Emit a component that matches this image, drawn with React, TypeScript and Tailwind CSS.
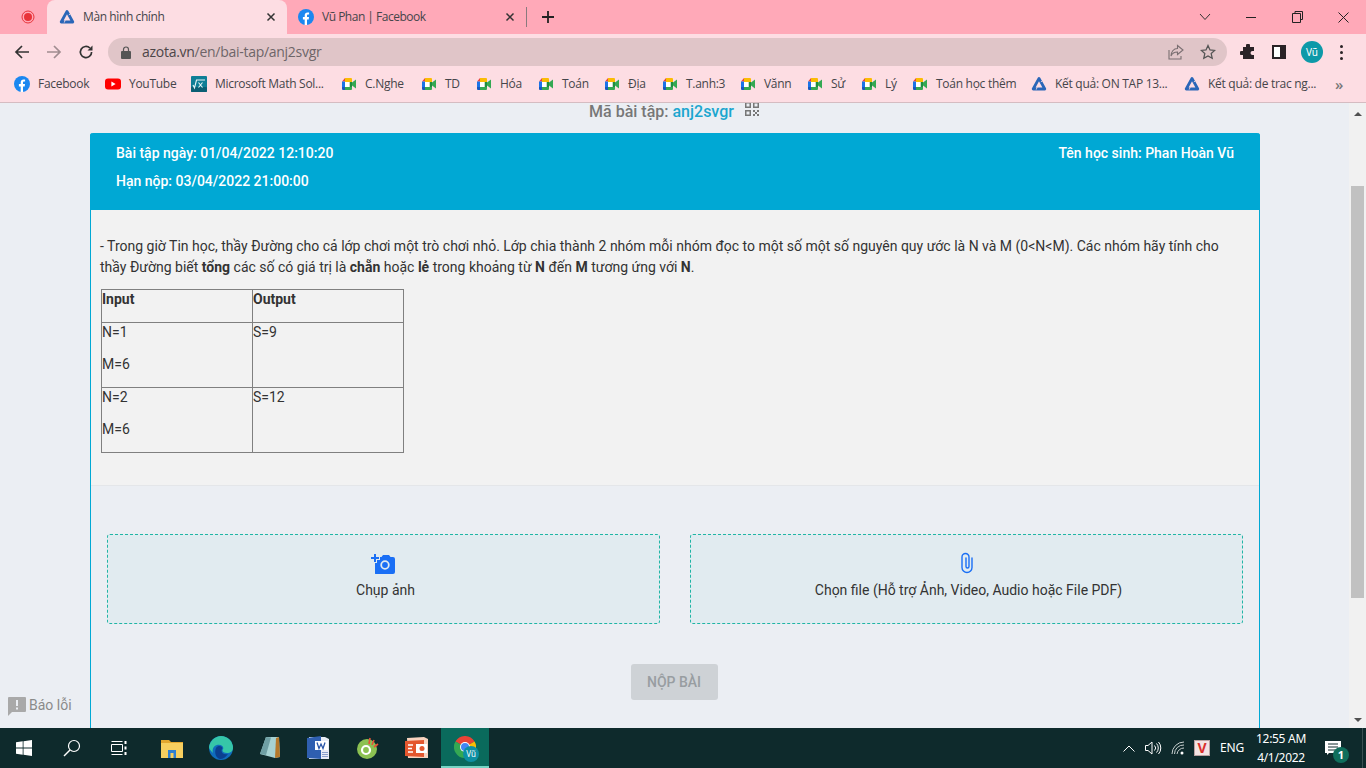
import React from "react";

const Fb = ({ s = 16 }: { s?: number }) => (
  <svg width={s} height={s} viewBox="0 0 16 16" className="shrink-0">
    <circle cx="8" cy="8" r="8" fill="#1b87f0" />
    <path d="M6.7 16V10.4H4.9V8h1.8V6.4c0-1.9 1.1-2.9 2.8-2.9.8 0 1.6.1 1.6.1v1.9h-.9c-.9 0-1.2.6-1.2 1.1V8h2l-.3 2.4H9V16z" fill="#fff" />
  </svg>
);
const Azota = ({ s = 16 }: { s?: number }) => (
  <svg width={s} height={s} viewBox="0 0 16 16" className="shrink-0">
    <path d="M8 2.400 L13.800 13 H2.200 Z" fill="none" stroke="#2a66b8" strokeWidth="2.800" strokeLinejoin="round" />
    <path d="M5.200 13.600 L6.400 10.600" stroke="#fddde3" strokeWidth="0.800" />
    <path d="M9.800 6 L11.200 5" stroke="#fddde3" strokeWidth="0.800" />
  </svg>
);
const Meet = () => (
  <svg width="16" height="16" viewBox="0 0 16 16" className="shrink-0">
    <path d="M4 2H10a1 1 0 0 1 1 1V6H4z" fill="#fbbc04" />
    <path d="M4 2 1 5.500H4z" fill="#e8453c" />
    <path d="M1 5.500h3V11H1z" fill="#1a73e8" />
    <path d="M1 11h3v3H2a1 1 0 0 1-1-1z" fill="#1558c0" />
    <path d="M4 11H11V13a1 1 0 0 1-1 1H4z" fill="#34a853" />
    <path d="M8.500 6H11V11H8.500z" fill="#1e8e3e" />
    <path d="M4 6h4.500v5H4z" fill="#fff" />
    <path d="M11 6.500 15 3.500V12.500L11 9.500z" fill="#34a853" />
  </svg>
);
const Yt = () => (
  <svg width="16" height="16" viewBox="0 0 16 16" className="shrink-0">
    <rect y="2.500" width="16" height="11" rx="3" fill="#f00" />
    <path d="M6.400 5.600 10.600 8l-4.200 2.400z" fill="#fff" />
  </svg>
);
const MathI = () => (
  <svg width="16" height="16" viewBox="0 0 16 16" className="shrink-0">
    <rect width="16" height="16" rx="1" fill="#0e7e96" />
    <rect y="11" width="16" height="5" rx="1" fill="#0a5f74" />
    <path d="M2 9l1.500 3L5.500 4H14" fill="none" stroke="#e8f6f8" strokeWidth="1.100" />
    <path d="M7.500 6.500l4 5M11.500 6.500l-4 5" stroke="#e8f6f8" strokeWidth="1.100" />
  </svg>
);

type Bm = { icon: React.ReactNode; label: string; w: string };
const bookmarks: Bm[] = [
  { icon: <Fb />, label: "Facebook", w: "w-[51px]" },
  { icon: <Yt />, label: "YouTube", w: "w-[46px]" },
  { icon: <MathI />, label: "Microsoft Math Sol...", w: "w-[110px]" },
  { icon: <Meet />, label: "C.Nghe", w: "w-[40px]" },
  { icon: <Meet />, label: "TD", w: "w-[15px]" },
  { icon: <Meet />, label: "Hóa", w: "w-[22px]" },
  { icon: <Meet />, label: "Toán", w: "w-[26px]" },
  { icon: <Meet />, label: "Địa", w: "w-[18px]" },
  { icon: <Meet />, label: "T.anh:3", w: "w-[38px]" },
  { icon: <Meet />, label: "Vănn", w: "w-[27px]" },
  { icon: <Meet />, label: "Sử", w: "w-[14px]" },
  { icon: <Meet />, label: "Lý", w: "w-[11px]" },
  { icon: <Meet />, label: "Toán học thêm", w: "w-[79px]" },
  { icon: <Azota />, label: "Kết quả: ON TAP 13...", w: "w-[113px]" },
  { icon: <Azota />, label: "Kết quả: de trac ng...", w: "w-[109px]" },
];

const X = ({ c = "#333" }: { c?: string }) => (
  <svg width="10" height="10" viewBox="0 0 10 10"><path d="M1.500 1.500l7 7M8.500 1.500l-7 7" stroke={c} strokeWidth="1.500" /></svg>
);

function TabStrip() {
  return (
    <div className="h-[34px] bg-[#ffa9b8] flex items-stretch shrink-0 text-[#45454a]">
      <div className="w-[47px] flex items-center justify-center pl-[8px]">
        <svg width="14" height="14" viewBox="0 0 14 14"><circle cx="7" cy="7" r="6" fill="none" stroke="#e8343a" strokeWidth="1" /><circle cx="7" cy="7" r="4" fill="#e8343a" /></svg>
      </div>
      <div className="w-[240px] bg-[#fddde3] rounded-t-[8px] flex items-center pl-[12px] pr-[11px]">
        <Azota />
        <span className="ml-[8px] flex-1 text-[12px] tracking-[-0.4px]">Màn hình chính</span>
        <X />
      </div>
      <div className="w-[239px] flex items-center pl-[11px] pr-[11px] relative">
        <Fb />
        <span className="ml-[8px] flex-1 text-[12px] tracking-[-0.5px]">Vũ Phan | Facebook</span>
        <X />
      </div>
      <div className="w-px h-[20px] bg-[#8a7a7e] self-center" />
      <div className="w-[42px] flex items-center justify-center">
        <svg width="14" height="14" viewBox="0 0 14 14"><path d="M7 1v12M1 7h12" stroke="#222" strokeWidth="1.800" /></svg>
      </div>
      <div className="flex-1 flex items-center justify-end">
        <div className="w-[46px] flex justify-center">
          <svg width="12" height="8" viewBox="0 0 12 8"><path d="M1 1l5 5.500L11 1" fill="none" stroke="#333" strokeWidth="1" /></svg>
        </div>
        <div className="w-[46px] flex justify-center">
          <div className="w-[10px] h-px bg-[#222]" />
        </div>
        <div className="w-[46px] flex justify-center">
          <svg width="11" height="12" viewBox="0 0 11 12"><path d="M3 2.500V.5h7.500v8H8.500M.5 2.500h8v9h-8z" fill="none" stroke="#222" strokeWidth="1" /></svg>
        </div>
        <div className="w-[46px] flex justify-center">
          <svg width="11" height="11" viewBox="0 0 11 11"><path d="M.5.5l10 10M10.500.5l-10 10" stroke="#222" strokeWidth="1" /></svg>
        </div>
      </div>
    </div>
  );
}

function Toolbar() {
  return (
    <div className="h-[34px] bg-[#fddde3] flex items-center shrink-0 pt-[2px]">
      <div className="w-[108px] flex items-center pl-[14px] gap-[16px]">
        <svg width="16" height="16" viewBox="0 0 16 16"><path d="M15 8H2M8 2 2 8l6 6" fill="none" stroke="#333" strokeWidth="1.700" /></svg>
        <svg width="16" height="16" viewBox="0 0 16 16"><path d="M1 8h13M8 2l6 6-6 6" fill="none" stroke="#a08c90" strokeWidth="1.700" /></svg>
        <svg width="16" height="16" viewBox="0 0 16 16"><path d="M13.600 8a5.600 5.600 0 1 1-1.700-4" fill="none" stroke="#333" strokeWidth="1.700" /><path d="M14.500 1.500v5h-5z" fill="#333" /></svg>
      </div>
      <div className="w-[1119px] h-[28px] rounded-full bg-[#e0c5c8] flex items-center pl-[13px] pr-[11px]">
        <svg width="10" height="13" viewBox="0 0 10 13"><path d="M2.500 5V3.500a2.500 2.500 0 0 1 5 0V5" fill="none" stroke="#555" strokeWidth="1.200" /><rect y="5" width="10" height="8" rx="1" fill="#555" /></svg>
        <span className="ml-[11px] text-[14px] tracking-[-0.28px] text-[#4d4648] flex-1 leading-none">azota.vn<span className="text-[#6e6568]">/en/bai-tap/anj2svgr</span></span>
        <svg width="18" height="18" viewBox="0 0 18 18"><path d="M10.500 2.500 16 7l-5.500 4.500V9C7 9 5 10.500 4 13c0-4 2.500-7.500 6.500-7.500z M2 7v9h12v-3" fill="none" stroke="#7a6f72" strokeWidth="1.100" /></svg>
        <svg width="16" height="16" viewBox="0 0 16 16" className="ml-[15px]"><path d="M8 1.500l2 4.400 4.700.5-3.500 3.200 1 4.700L8 11.900l-4.200 2.400 1-4.700L1.300 6.400 6 5.900z" fill="none" stroke="#555" strokeWidth="1.300" /></svg>
      </div>
      <div className="flex-1 flex items-center pl-[13px]">
        <svg width="16" height="16" viewBox="0 0 16 16"><path d="M6 1.500a2 2 0 0 1 4 0V3h4v4h-1.500a2 2 0 0 0 0 4H14v4H3v-4H1.500a2 2 0 0 1 0-4H3V3h3z" fill="#2a2226" /></svg>
        <div className="ml-[16px] w-[14px] h-[14px] border-2 border-[#2a2226] border-r-[6px] bg-white" />
        <div className="ml-[15px] w-[22px] h-[22px] rounded-full bg-[#0d99a8] flex items-center justify-center text-white text-[10px]" style={{ fontFamily: "'Noto Sans'" }}>Vũ</div>
        <div className="ml-[17px] flex flex-col gap-[3px]">
          <div className="w-[3px] h-[3px] rounded-full bg-[#2a2226]" />
          <div className="w-[3px] h-[3px] rounded-full bg-[#2a2226]" />
          <div className="w-[3px] h-[3px] rounded-full bg-[#2a2226]" />
        </div>
      </div>
    </div>
  );
}

function Bookmarks() {
  return (
    <div className="h-[35px] bg-[#fddde3] border-b border-[#d5bcc1] flex items-center pl-[14px] pb-[2px] shrink-0 text-[12px] tracking-[-0.28px] text-[#45454a]">
      <div className="flex items-center gap-[16px]">
        {bookmarks.map((b) => (
          <div key={b.label} className="flex items-center gap-[8px]">
            {b.icon}
            <span className={`${b.w} whitespace-nowrap`}>{b.label}</span>
          </div>
        ))}
      </div>
      <span className="ml-[18px] text-[15px] font-semibold text-[#777]">»</span>
    </div>
  );
}

function Scrollbar() {
  return (
    <div className="w-[17px] bg-[#f1f1f1] flex flex-col items-center shrink-0">
      <div className="h-[17px] mt-[1px] flex items-center justify-center">
        <div className="w-0 h-0 border-l-[4px] border-r-[4px] border-b-[4px] border-l-transparent border-r-transparent border-b-[#505050] mt-[3px]" />
      </div>
      <div className="mt-[65px] w-[13px] h-[412px] bg-[#c1c1c1]" />
      <div className="flex-1" />
      <div className="h-[17px] flex items-center justify-center">
        <div className="w-0 h-0 border-l-[4px] border-r-[4px] border-t-[4px] border-l-transparent border-r-transparent border-t-[#505050]" />
      </div>
    </div>
  );
}

const cellP = "h-[32px] leading-[18px]";

function Sheet() {
  return (
    <table className="border-collapse w-[303px] table-fixed text-[14px] text-[#333]">
      <tbody>
        <tr className="h-[33px]">
          <td className="border border-[#808080] align-top p-0 font-bold"><p className={cellP}>Input</p></td>
          <td className="border border-[#808080] align-top p-0 font-bold"><p className={cellP}>Output</p></td>
        </tr>
        <tr>
          <td className="border border-[#808080] align-top p-0"><p className={cellP}>N=1</p><p className={cellP}>M=6</p></td>
          <td className="border border-[#808080] align-top p-0"><p className={cellP}>S=9</p></td>
        </tr>
        <tr>
          <td className="border border-[#808080] align-top p-0"><p className={cellP}>N=2</p><p className={cellP}>M=6</p></td>
          <td className="border border-[#808080] align-top p-0"><p className={cellP}>S=12</p></td>
        </tr>
      </tbody>
    </table>
  );
}

function Page() {
  return (
    <div className="flex-1 min-h-0 flex bg-[#ebeef3]" style={{ fontFamily: "Roboto, sans-serif" }}>
      <div className="flex-1 relative overflow-hidden">
        <div className="h-[30px] flex items-start justify-center text-[16px] font-medium text-[#777] leading-[18px]">
          <span>Mã bài tập: <span className="text-[#1ba6cf]">anj2svgr</span></span>
          <svg width="16" height="16" viewBox="0 0 16 16" className="ml-[10px] -mt-[2px]" fill="#777">
            <path d="M1 1h6v6H1zM2.500 2.500v3h3v-3zM9 1h6v6H9zM10.500 2.500v3h3v-3zM1 9h6v6H1zM2.500 10.500v3h3v-3z" fillRule="evenodd" />
            <path d="M9 9h2v2H9zM13 9h2v2h-2zM11 11h2v2h-2zM9 13h2v2H9zM13 13h2v2h-2z" />
          </svg>
        </div>
        <div className="ml-[90px] w-[1170px] border-x border-[#00a8d4] rounded-t-[3px]">
          <div className="h-[77px] -mx-px bg-[#00a8d4] rounded-t-[3px] px-[26px] pt-[10px] text-white text-[14px] font-medium leading-[20px]">
            <div className="flex justify-between"><span>Bài tập ngày: 01/04/2022 12:10:20</span><span>Tên học sinh: Phan Hoàn Vũ</span></div>
            <div className="mt-[8px]">Hạn nộp: 03/04/2022 21:00:00</div>
          </div>
          <div className="bg-[#f2f2f2] h-[276px] border-b border-[#e4e6e9] pl-[9px] pr-[25px] pt-[26px] text-[14px] text-[#333] leading-[21px]">
            <p>- Trong giờ Tin học, thầy Đường cho cả lớp chơi một trò chơi nhỏ. Lớp chia thành 2 nhóm mỗi nhóm đọc to một số một số nguyên quy ước là N và M (0&lt;N&lt;M). Các nhóm hãy tính cho thầy Đường biết <b>tổng</b> các số có giá trị là <b>chẵn</b> hoặc <b>lẻ</b> trong khoảng từ <b>N</b> đến <b>M</b> tương ứng với <b>N</b>.</p>
            <div className="mt-[11px] ml-px"><Sheet /></div>
          </div>
          <div className="pt-[48px] px-[16px] flex gap-[30px]">
            <div className="flex-1 h-[90px] bg-[#e1ebf0] border border-dashed border-[#20b5a5] rounded-[3px] flex flex-col items-center pt-[17px]">
              <svg width="24" height="22" viewBox="0 0 24 22" className="-ml-[2px]">
                <path d="M3 2h2v3h3v2H5v3H3V7H0V5h3z" fill="#1a6ff5" />
                <path d="M6 8h3V5h1.500l1.500-2h6l1.500 2H22a2 2 0 0 1 2 2v13a2 2 0 0 1-2 2H5a2 2 0 0 1-1-.3V11h2z" fill="#1a6ff5" />
                <circle cx="14" cy="13" r="3.800" fill="none" stroke="#e1ebf0" strokeWidth="1.800" />
              </svg>
              <span className="mt-[6px] ml-[4px] text-[14px] text-[#333] leading-[20px]">Chụp ảnh</span>
            </div>
            <div className="flex-1 h-[90px] bg-[#e1ebf0] border border-dashed border-[#20b5a5] rounded-[3px] flex flex-col items-center pt-[17px]">
              <svg width="14" height="22" viewBox="0 0 14 22">
                <path d="M12 6V15.500a5 5 0 0 1-10 0V5a3.500 3.500 0 0 1 7 0V14.500a1.500 1.500 0 0 1-3 0V6" fill="none" stroke="#1a6ff5" strokeWidth="1.400" strokeLinecap="round" />
              </svg>
              <span className="mt-[6px] ml-[4px] text-[14px] text-[#333] leading-[20px]">Chọn file (Hỗ trợ Ảnh, Video, Audio hoặc File PDF)</span>
            </div>
          </div>
          <div className="flex justify-center pt-[40px] pb-[28px]">
            <div className="w-[87px] h-[36px] -ml-[2px] rounded-[3px] bg-[#ced2d6] text-[#989da1] text-[14px] font-medium flex items-center justify-center">NỘP BÀI</div>
          </div>
        </div>
        <div className="absolute left-[7px] bottom-[12px] flex items-center text-[14px] text-[#8a8a8a]">
          <svg width="20" height="20" viewBox="0 0 20 20"><path d="M2 1h16a1 1 0 0 1 1 1v13a1 1 0 0 1-1 1H5l-4 4V2a1 1 0 0 1 1-1z" fill="#a9a9a9" /><path d="M9 4h2v6H9zM9 11.500h2v2H9z" fill="#ebeef3" /></svg>
          <span className="ml-[2px]">Báo lỗi</span>
        </div>
      </div>
      <Scrollbar />
    </div>
  );
}

function Taskbar() {
  const cell = "w-[48px] h-full flex items-center justify-center relative shrink-0";
  const app = "w-[49px] h-full flex items-center justify-center relative shrink-0";
  return (
    <div className="h-[40px] bg-[#0e2a2c] flex items-center shrink-0 text-white" style={{ fontFamily: "'Noto Sans', sans-serif" }}>
      <div className={cell}>
        <svg width="16" height="16" viewBox="0 0 16 16" fill="#fff"><path d="M0 2.200 6.700 1.300v6.300H0zM7.500 1.200 16 0v7.600H7.500zM0 8.400h6.700v6.300L0 13.800zM7.500 8.400H16V16l-8.500-1.200z" /></svg>
      </div>
      <div className={cell}>
        <svg width="18" height="18" viewBox="0 0 18 18"><circle cx="11" cy="7" r="5.500" fill="none" stroke="#fff" strokeWidth="1.200" /><path d="M7 11l-6 6" stroke="#fff" strokeWidth="1.500" /></svg>
      </div>
      <div className={cell}>
        <svg width="18" height="16" viewBox="0 0 18 16" fill="none" stroke="#fff" strokeWidth="1"><path d="M.5 4.500h11v7H.5zM.5 1.500h11M.5 14.500h11" /><path d="M14.500 1v3M14.500 6.500v3M14.500 12v3" strokeWidth="2" /></svg>
      </div>
      <div className="w-[3px]" />
      <div className={app}>
        <svg width="22" height="19" viewBox="0 0 22 19"><path d="M0 1h8l2 2h12v3H0z" fill="#e3a72f" /><path d="M0 4h22v15H0z" fill="#f7cf5f" /><path d="M7 11h8v8H7z" fill="#2f7fd0" /><path d="M9.500 14h3v5h-3z" fill="#f7cf5f" /></svg>
      </div>
      <div className={app}>
        <svg width="24" height="24" viewBox="0 0 24 24"><circle cx="12" cy="12" r="12" fill="#0f6cbd" /><path d="M12 0a12 12 0 0 1 12 12c0 3-2.500 5-6 5-3 0-4.500-1-4.500-2.500 0-1 .8-1.500.8-2.500 0-2-3-4-6.300-3C4 10 3 14 4 17 2 15 0 13 0 11 1 5 6 0 12 0z" fill="#36c6a8" /><path d="M7 12c2-3 6-2 6.300 0 0 1-.8 1.500-.8 2.500C12.500 17 15 19 19 18c-2 3-5 5-8 5-4-1-6-6-4-11z" fill="#0b3f8f" /></svg>
      </div>
      <div className={app}>
        <svg width="22" height="24" viewBox="0 0 22 24"><path d="M7 1h13l1 20-5 1L1 18z" fill="#a7d2d3" /><path d="M16 22 21 21 20 1l-3 1z" fill="#b5782b" /><path d="M1 18 7 1l5 .5L7 19z" fill="#6f9fa4" /></svg>
      </div>
      <div className={app}>
        <svg width="23" height="24" viewBox="0 0 23 24"><path d="M2 1h16l4 2v20H2z" fill="#e8ecf5" /><path d="M0 2l14-2v23L0 22z" fill="#2f5fb0" /><path d="M8 5h13v9H8z" fill="#fff" /><path d="M10 6.500l2 6 2-4.500 2 4.500 2-6" fill="none" stroke="#2a56a8" strokeWidth="1.300" /><path d="M15 16.500h6M15 18.500h6M15 20.500h6" stroke="#8aa0cc" /></svg>
      </div>
      <div className={app}>
        <svg width="22" height="22" viewBox="0 0 22 22"><circle cx="10" cy="12" r="10" fill="#8cc152" /><circle cx="9" cy="13" r="4" fill="none" stroke="#fff" strokeWidth="2.200" /><path d="M13 1l-1 6" stroke="#e8503a" strokeWidth="1.600" /><path d="M17 3l-2 5M21 7l-4 3" stroke="#e8503a" strokeWidth="1.600" /></svg>
      </div>
      <div className={app}>
        <svg width="24" height="22" viewBox="0 0 24 22"><path d="M2 1l17-1 4 2v19H3z" fill="#f9d3bf" /><path d="M0 4l19-1v17L0 19z" fill="#e4572e" /><path d="M11 7h11v9H11z" fill="#fff" /><circle cx="17" cy="11.500" r="2.500" fill="#e4572e" /><path d="M3 8h5M3 11.500h4M3 15h5" stroke="#fff" strokeWidth="1.400" /></svg>
      </div>
      <div className={`${cell} bg-[#0a6a5c] border-b-2 border-[#76d5c4]`}>
        <svg width="22" height="22" viewBox="0 0 22 22">
          <path d="M11 11 1.470 5.500A11 11 0 0 1 20.530 5.500Z" fill="#e84336" />
          <path d="M11 11 20.530 5.500A11 11 0 0 1 11 22Z" fill="#fbbc04" />
          <path d="M11 11 11 22A11 11 0 0 1 1.470 5.500Z" fill="#34a853" />
          <circle cx="11" cy="11" r="5" fill="#fff" />
          <circle cx="11" cy="11" r="4" fill="#4285f4" />
        </svg>
        <div className="absolute left-[22px] top-[18px] w-[16px] h-[16px] rounded-full bg-[#0d8fa3] text-[8px] flex items-center justify-center">Vũ</div>
      </div>
      <div className="flex-1" />
      <div className="flex items-center h-full">
        <svg width="12" height="7" viewBox="0 0 12 7"><path d="M.5 6.500 6 1l5.500 5.500" fill="none" stroke="#fff" /></svg>
        <svg width="17" height="14" viewBox="0 0 17 14" className="ml-[10px]" fill="none" stroke="#fff"><path d="M.5 4.500h2.500L7 1v12L3 9.500H.5z" /><path d="M9.500 4.500a3.500 3.500 0 0 1 0 5M11.500 2.500a6.500 6.500 0 0 1 0 9M13.500 1a9 9 0 0 1 0 12" /></svg>
        <svg width="14" height="14" viewBox="0 0 14 14" className="ml-[9px]" fill="none" stroke="#c8d0d0"><path d="M1 13a12 12 0 0 1 12-12M3.500 13A9 9 0 0 1 13 4M6 13a7 7 0 0 1 7-6" /><circle cx="11" cy="12" r="1.500" fill="#fff" stroke="none" /></svg>
        <div className="ml-[9px] w-[16px] h-[16px] bg-[#f3e3e3] border border-[#b8a0a0] flex items-center justify-center text-[#d9302c] text-[14px] font-bold leading-none">V</div>
        <span className="ml-[10px] w-[24px] text-[12px] tracking-[-0.2px] text-center">ENG</span>
        <div className="ml-[7px] w-[60px] text-[12px] tracking-[-0.3px] leading-[19px] text-center">
          <div className="whitespace-nowrap">12:55 AM</div>
          <div>4/1/2022</div>
        </div>
        <div className="ml-[14px] w-[33px] h-full relative">
          <svg width="16" height="14" viewBox="0 0 16 14" className="absolute left-[0px] top-[13px]"><path d="M0 0h16v12H4l-2 2v-2H0z" fill="#fff" /><path d="M3 3h10M3 6h10M3 9h7" stroke="#0e2a2c" /></svg>
          <div className="absolute left-[8px] top-[19px] w-[16px] h-[16px] rounded-full bg-[#0f6e5c] text-[11px] flex items-center justify-center font-bold">1</div>
        </div>
        <div className="w-[8px] h-full flex justify-center"><div className="w-px h-full bg-[#3a5052]" /></div>
      </div>
    </div>
  );
}

export default function App() {
  return (
    <div className="w-[1366px] h-[768px] overflow-hidden flex flex-col" style={{ fontFamily: "'Open Sans', sans-serif" }}>
      <TabStrip />
      <Toolbar />
      <Bookmarks />
      <Page />
      <Taskbar />
    </div>
  );
}
